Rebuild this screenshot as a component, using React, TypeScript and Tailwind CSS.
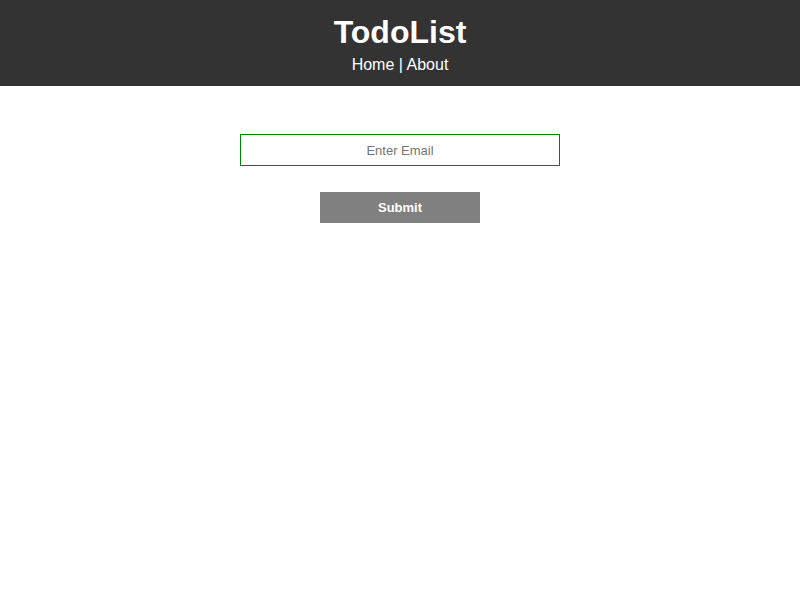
export default function App() {
  return (
    <div className="min-h-[600px] bg-white font-['Liberation_Sans',Arial,sans-serif]">
      <header className="h-[86px] bg-[#333333] text-white flex flex-col items-center pt-[13px]">
        <h1 className="text-[32px] font-bold leading-[38px]">TodoList</h1>
        <nav className="text-[16px] leading-[22px] mt-[3px]">
          <a href="#">Home</a> | <a href="#">About</a>
        </nav>
      </header>
      <form className="flex flex-col items-center pt-[48px]">
        <input
          type="email"
          placeholder="Enter Email"
          className="w-[320px] h-[32px] border border-[#008000] text-center text-[13px] outline-none placeholder:text-[#757575]"
        />
        <button
          type="button"
          className="mt-[26px] w-[160px] h-[31px] bg-[#808080] text-white text-[13px] font-bold"
        >
          Submit
        </button>
      </form>
    </div>
  );
}
